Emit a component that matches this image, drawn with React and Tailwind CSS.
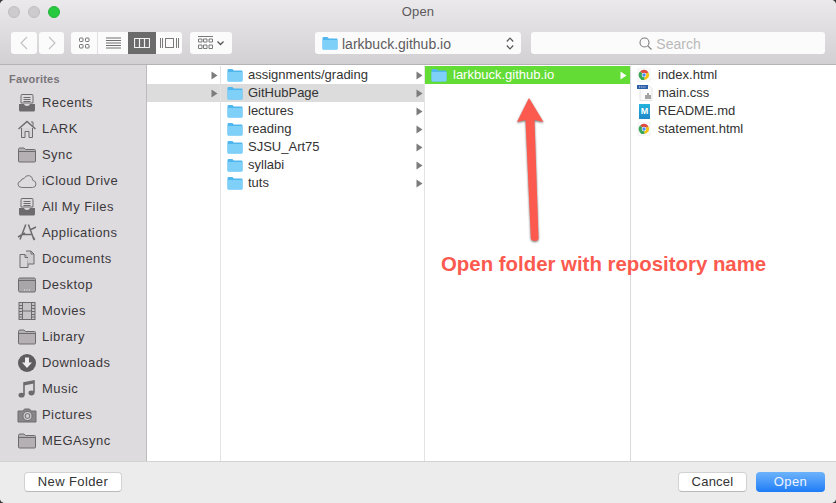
import { useState } from "react";

const GRAY = "#6e6b6e";

function Svg({ w = 20, h = 20, className = "", children }) {
  return (
    <svg width={w} height={h} viewBox={`0 0 ${w} ${h}`} className={className} fill="none">
      {children}
    </svg>
  );
}

function BlueFolder() {
  return (
    <svg width="16" height="14" viewBox="0 0 16 14" className="shrink-0">
      <path d="M0.5 2.2 Q0.5 1 1.6 1 H5.4 L6.8 2.4 H14.4 Q15.5 2.4 15.5 3.5 V12.4 Q15.5 13.4 14.4 13.4 H1.6 Q0.5 13.4 0.5 12.4 Z" fill="#4fb6ee" />
      <path d="M0.5 4 H15.5 V12.4 Q15.5 13.4 14.4 13.4 H1.6 Q0.5 13.4 0.5 12.4 Z" fill="#7fd0f8" />
    </svg>
  );
}

function GrayFolder() {
  return (
    <Svg>
      <path d="M1.5 4.5 Q1.5 3 3 3 H7 L8.5 4.5 H17.5 Q18.5 4.5 18.5 5.5 V16 Q18.5 17 17.5 17 H2.5 Q1.5 17 1.5 16 Z" fill="#b4b0b4" stroke={GRAY} />
      <path d="M1.5 6.5 H18.5" stroke={GRAY} />
    </Svg>
  );
}

function TrayIcon() {
  return (
    <Svg>
      <path d="M4 2.5 Q4 1.5 5 1.5 H15 Q16 1.5 16 2.5 V10 H4 Z" fill="#dcd9dc" stroke={GRAY} />
      <path d="M6.5 4.5 H13.5 M6.5 6.5 H13.5 M6.5 8.5 H13.5" stroke={GRAY} />
      <path d="M2 11 H7 Q7.5 13 10 13 Q12.5 13 13 11 H18 V17 Q18 18.5 16.5 18.5 H3.5 Q2 18.5 2 17 Z" fill={GRAY} />
    </Svg>
  );
}

function HomeIcon() {
  return (
    <Svg>
      <path d="M1.5 10 L10 2.5 L18.5 10" stroke={GRAY} strokeWidth="1.5" />
      <path d="M14 3 H16 V7" stroke={GRAY} />
      <path d="M4.5 9 V18.5 H8 V12.5 H12 V18.5 H15.5 V9" stroke={GRAY} fill="#d8d5d8" />
    </Svg>
  );
}

function CloudIcon() {
  return (
    <Svg>
      <path d="M5 16.5 Q1 16.5 1 13.2 Q1 10.6 3.8 10 Q4.5 7.2 7 7.6 Q8.6 4 12.2 4.6 Q15.8 5.4 15.6 9.2 Q19 10 19 13 Q19 16.5 15.4 16.5 Z" stroke="#7a777a" />
    </Svg>
  );
}

function AppsIcon() {
  return (
    <Svg>
      <path d="M11.4 1.5 L16 14 M8.8 1.5 L3 16.5 M5 11.5 H15 M1 14 L8 10 M13 7 L19 4" stroke={GRAY} strokeWidth="1.5" />
      <path d="M16 14 L17.5 17" stroke={GRAY} strokeWidth="2" />
    </Svg>
  );
}

function DocsIcon() {
  return (
    <Svg>
      <path d="M3 5.5 H8 L11 8.5 V18.5 H3 Z" fill="#d8d5d8" stroke={GRAY} />
      <path d="M9 2 H14 L17 5 V15 H11" fill="#d0cdd0" stroke={GRAY} />
      <path d="M8 5.5 V8.5 H11 M14 2 V5 H17" stroke={GRAY} />
    </Svg>
  );
}

function DesktopIcon() {
  return (
    <Svg>
      <rect x="1.5" y="3" width="17" height="14" rx="1.5" fill="#a9a6a9" stroke={GRAY} />
      <path d="M1.5 5.5 H18.5" stroke={GRAY} />
      <path d="M7 15 H8 M9.5 15 H10.5 M12 15 H13" stroke="#ececec" />
    </Svg>
  );
}

function MoviesIcon() {
  return (
    <Svg>
      <rect x="2" y="1.5" width="16" height="17" fill="#c6c3c6" stroke={GRAY} />
      <path d="M5.5 1.5 V18.5 M14.5 1.5 V18.5 M5.5 10 H14.5" stroke={GRAY} />
      <path d="M2 4.5 H5.5 M2 7.5 H5.5 M2 10.5 H5.5 M2 13.5 H5.5 M2 16 H5.5 M14.5 4.5 H18 M14.5 7.5 H18 M14.5 10.5 H18 M14.5 13.5 H18 M14.5 16 H18" stroke={GRAY} />
    </Svg>
  );
}

function DownloadIcon() {
  return (
    <Svg>
      <circle cx="10" cy="10" r="9" fill="#5f5c5f" />
      <path d="M8 4.5 H12 V9.5 H15 L10 15 L5 9.5 H8 Z" fill="#ececec" />
    </Svg>
  );
}

function MusicIcon() {
  return (
    <Svg>
      <path d="M7 16 V4 L17 2 V13.5" stroke={GRAY} strokeWidth="1.6" />
      <path d="M7 4 L17 2 V4.5 L7 6.5 Z" fill={GRAY} />
      <ellipse cx="4.5" cy="16.2" rx="3" ry="2.4" fill={GRAY} />
      <ellipse cx="14.5" cy="14" rx="3" ry="2.4" fill={GRAY} />
    </Svg>
  );
}

function CameraIcon() {
  return (
    <Svg>
      <path d="M1 6 H6 L7.5 4 H12.5 L14 6 H19 V17 H1 Z" fill="#8a878a" stroke={GRAY} />
      <circle cx="10.5" cy="11" r="4.6" fill="#cfcccf" stroke={GRAY} />
      <circle cx="10.5" cy="11" r="2.4" stroke={GRAY} />
    </Svg>
  );
}

function Chevron({ dir }) {
  return (
    <svg width="8" height="14" viewBox="0 0 8 14" fill="none">
      <path d={dir === "left" ? "M7 1 L1 7 L7 13" : "M1 1 L7 7 L1 13"} stroke="#c2c0c2" strokeWidth="1.1" />
    </svg>
  );
}

function Arrowhead({ color = "#7d7b7d" }) {
  return (
    <svg width="7" height="9" viewBox="0 0 7 9" className="shrink-0">
      <path d="M0.5 0.5 L6.5 4.5 L0.5 8.5 Z" fill={color} />
    </svg>
  );
}

function ChromeDoc() {
  return (
    <svg width="14" height="14" viewBox="0 0 14 14" className="shrink-0">
      <rect x="1" y="0" width="12" height="14" fill="#fafafa" stroke="#e6e6e6" strokeWidth="0.5" />
      <path d="M7 7 L3.1 3.6 A5 5 0 0 1 11.4 4.6 Z" fill="#dd4b3e" />
      <path d="M7 7 L11.4 4.6 A5 5 0 0 1 7.5 12 Z" fill="#f4c20d" />
      <path d="M7 7 L7.5 12 A5 5 0 0 1 3.1 3.6 Z" fill="#3aa757" />
      <circle cx="7" cy="7" r="2.3" fill="#fff" />
      <circle cx="7" cy="7" r="1.7" fill="#4a8bf5" />
    </svg>
  );
}

function CssDoc() {
  return (
    <svg width="16" height="16" viewBox="0 0 16 16" className="shrink-0">
      <path d="M3 0.5 H12 L15 3.5 V15.5 H3 Z" fill="#fafafa" stroke="#d5d5d5" strokeWidth="0.6" />
      <rect x="0" y="0" width="11" height="4" fill="#2d5ea8" />
      <path d="M2 2 H9" stroke="#dfe8f5" strokeDasharray="1.2 1" />
      <path d="M8 10 H10 V8 H12 V10 H14 V14 H8 Z" fill="#a3a3a3" />
    </svg>
  );
}

function MdDoc() {
  return (
    <div className="w-[11px] h-[15px] shrink-0 ml-[2px] bg-gradient-to-b from-[#25b4dc] to-[#1f86c8] flex items-center justify-center">
      <span className="text-white text-[9px] font-bold leading-none">M</span>
    </div>
  );
}

const favorites = [
  ["Recents", <TrayIcon />],
  ["LARK", <HomeIcon />],
  ["Sync", <GrayFolder />],
  ["iCloud Drive", <CloudIcon />],
  ["All My Files", <TrayIcon />],
  ["Applications", <AppsIcon />],
  ["Documents", <DocsIcon />],
  ["Desktop", <DesktopIcon />],
  ["Movies", <MoviesIcon />],
  ["Library", <GrayFolder />],
  ["Downloads", <DownloadIcon />],
  ["Music", <MusicIcon />],
  ["Pictures", <CameraIcon />],
  ["MEGAsync", <GrayFolder />],
];

const folders = ["assignments/grading", "GitHubPage", "lectures", "reading", "SJSU_Art75", "syllabi", "tuts"];

const files = [
  ["index.html", <ChromeDoc />],
  ["main.css", <CssDoc />],
  ["README.md", <MdDoc />],
  ["statement.html", <ChromeDoc />],
];

function Toolbar() {
  return (
    <div className="flex h-[22px] mt-[9px] pl-[11px] pr-[11px]">
      <div className="flex gap-[2px]">
        <button className="w-[26px] bg-[#fbfbfb] rounded-[3px] flex items-center justify-center">
          <Chevron dir="left" />
        </button>
        <button className="w-[25px] bg-[#fbfbfb] rounded-[3px] flex items-center justify-center">
          <Chevron dir="right" />
        </button>
      </div>

      <div className="flex ml-[7px] w-[111px] bg-[#fbfbfb] rounded-[3px] overflow-hidden">
        <div className="w-[27px] flex items-center justify-center border-r border-[#e2e0e2]">
          <svg width="12" height="12" viewBox="0 0 12 12" fill="none" stroke="#6f6f6f">
            <rect x="1.5" y="1" width="3.5" height="3.5" rx="0.8" />
            <rect x="7.5" y="1" width="3.5" height="3.5" rx="0.8" />
            <rect x="1.5" y="7.5" width="3.5" height="3.5" rx="0.8" />
            <rect x="7.5" y="7.5" width="3.5" height="3.5" rx="0.8" />
          </svg>
        </div>
        <div className="w-[30px] flex items-center justify-center">
          <svg width="15" height="12" viewBox="0 0 15 12" stroke="#6f6f6f">
            <path d="M0 1 H15 M0 3.5 H15 M0 6 H15 M0 8.5 H15 M0 11 H15" />
          </svg>
        </div>
        <div className="w-[28px] bg-[#6b6b6b] flex items-center justify-center">
          <svg width="16" height="10" viewBox="0 0 16 10" fill="none" stroke="#f2f2f2">
            <rect x="0.5" y="0.5" width="15" height="9" rx="0.5" strokeWidth="1.2" />
            <path d="M5.5 0.5 V9.5 M10.5 0.5 V9.5" strokeWidth="1.2" />
          </svg>
        </div>
        <div className="flex-1 flex items-center justify-center">
          <svg width="19" height="12" viewBox="0 0 19 12" fill="none" stroke="#7a7a7a">
            <rect x="5.5" y="1.5" width="8" height="9" />
            <path d="M0.5 1 V11 M2.5 1 V11 M16.5 1 V11 M18.5 1 V11" />
          </svg>
        </div>
      </div>

      <div className="ml-[8px] w-[42px] bg-[#fbfbfb] rounded-[3px] flex items-center justify-center gap-[4px]">
        <svg width="15" height="14" viewBox="0 0 15 14" fill="none" stroke="#7a7a7a">
          <path d="M0 0.5 H15" />
          <path d="M0.5 3 H4 V6 H0.5 Z M5.5 3 H9 V6 H5.5 Z M11 3 H14.5 V6 H11 Z M0.5 9 H4 V12.5 H0.5 Z M5.5 9 H9 V12.5 H5.5 Z M11 9 H14.5 V12.5 H11 Z" />
        </svg>
        <svg width="7" height="5" viewBox="0 0 7 5" fill="none" stroke="#555" strokeWidth="1.3">
          <path d="M0.5 0.5 L3.5 3.5 L6.5 0.5" />
        </svg>
      </div>

      <div className="ml-[83px] w-[206px] bg-[#fbfbfb] rounded-[3px] flex items-center pl-[7px] pr-[7px]">
        <BlueFolder />
        <span className="ml-[4px] pt-px text-[14px] text-[#5e5c5e] flex-1">larkbuck.github.io</span>
        <svg width="8" height="13" viewBox="0 0 8 13" fill="none" stroke="#555" strokeWidth="1.2">
          <path d="M0.8 4.5 L4 1.2 L7.2 4.5 M0.8 8.5 L4 11.8 L7.2 8.5" />
        </svg>
      </div>

      <div className="ml-[10px] flex-1 bg-[#fbfbfb] rounded-[3px] flex items-center justify-center gap-[4px] pr-[16px] text-[#b9b9b9]">
        <svg width="13" height="13" viewBox="0 0 13 13" fill="none" stroke="#7c7c7c" strokeWidth="1.1">
          <circle cx="5.5" cy="5.5" r="4.5" />
          <path d="M8.8 8.8 L12.5 12.5" />
        </svg>
        <span className="pt-px text-[14px]">Search</span>
      </div>
    </div>
  );
}

export default function App() {
  const [selected] = useState("GitHubPage");

  return (
    <div className="relative w-[836px] h-[503px] overflow-hidden bg-[#3a3a3a] text-[13px] leading-[18px] font-['Liberation_Sans',Arial,sans-serif]">
      <div className="flex flex-col h-full rounded-[5px] overflow-hidden bg-[#ececec]">
        <header className="h-[65px] shrink-0 bg-gradient-to-b from-[#ebe9eb] to-[#d2d0d2] border-b border-[#b5b3b5]">
          <div className="relative flex items-center h-[23px] pl-[8px] gap-[8px]">
            <span className="w-[12px] h-[12px] rounded-full bg-[#cdcbcd] border border-[#bfbdbf]" />
            <span className="w-[12px] h-[12px] rounded-full bg-[#cdcbcd] border border-[#bfbdbf]" />
            <span className="w-[12px] h-[12px] rounded-full bg-[#27c93f] border border-[#22b537]" />
            <span className="absolute left-0 right-0 pt-px text-center text-[#5c5a5c] tracking-[0.2px]">Open</span>
          </div>
          <Toolbar />
        </header>

        <div className="flex flex-1 min-h-0">
          <aside className="w-[147px] shrink-0 bg-[#dedbdf] border-r border-[#bdbbbd]">
            <div className="h-[25px] pl-[9px] pt-[5px] text-[11px] font-bold text-[#787578] tracking-[0.2px]">Favorites</div>
            {favorites.map(([name, icon]) => (
              <div key={name} className="h-[26px] flex items-center pl-[17px] gap-[5px] text-[#3b393b] tracking-[0.45px]">
                {icon}
                <span>{name}</span>
              </div>
            ))}
          </aside>

          <main className="flex flex-1 min-w-0 bg-white pt-px">
            <section className="w-[74px] shrink-0 border-r border-[#e3e3e3]">
              <div className="h-[18px] flex items-center justify-end pr-[2px]">
                <Arrowhead />
              </div>
              <div className="h-[18px] flex items-center justify-end pr-[2px] bg-[#dcdcdc]">
                <Arrowhead />
              </div>
            </section>

            <section className="w-[204px] shrink-0 border-r border-[#e3e3e3]">
              {folders.map((f) => (
                <div key={f} className={`h-[18px] flex items-center pl-[6px] pr-[1px] text-[#333] ${f === selected ? "bg-[#dcdcdc]" : ""}`}>
                  <BlueFolder />
                  <span className="ml-[5px] flex-1">{f}</span>
                  <Arrowhead />
                </div>
              ))}
            </section>

            <section className="w-[206px] shrink-0 border-r border-[#d9d9d9]">
              <div className="h-[18px] flex items-center pl-[6px] pr-[3px] bg-[#63dc35] text-white">
                <BlueFolder />
                <span className="ml-[6px] flex-1">larkbuck.github.io</span>
                <Arrowhead color="#ffffff" />
              </div>
            </section>

            <section className="flex-1 pl-[6px]">
              {files.map(([name, icon]) => (
                <div key={name} className="h-[18px] flex items-center text-[#333]">
                  <span className="w-[21px] flex items-center">{icon}</span>
                  <span>{name}</span>
                </div>
              ))}
            </section>
          </main>
        </div>

        <footer className="h-[42px] shrink-0 border-t border-[#d3d3d3] bg-[#ececec] flex items-center pl-[24px] pr-[11px] pb-[1px]">
          <button className="w-[98px] h-[20px] bg-white rounded-[4px] border border-[#d2d2d2] border-b-[#b9b9b9] text-[#333] tracking-[0.4px]">New Folder</button>
          <button className="ml-auto w-[69px] h-[20px] bg-white rounded-[4px] border border-[#d2d2d2] border-b-[#b9b9b9] text-[#333] tracking-[0.25px]">Cancel</button>
          <button className="ml-[9px] w-[69px] h-[20px] rounded-[4px] bg-gradient-to-b from-[#6db3fb] to-[#1a7cf7] text-[#eef5ff] tracking-[0.4px]">Open</button>
        </footer>
      </div>

      {/* annotation on top of the dialog */}
      <svg width="60" height="160" viewBox="0 0 60 160" className="absolute left-[505px] top-[90px] drop-shadow-[0_1px_1px_rgba(0,0,0,0.55)]">
        <path d="M24 8 L38.5 32 L29.5 30 L33.5 148 Q33.5 151 30 151 Q26 151 25.8 148 L20.5 30 L12 32 Z" fill="#fc5a4f" />
      </svg>
      <div className="absolute left-[441px] top-[252px] text-[20.4px] leading-[24px] font-bold text-[#fc5a4f] whitespace-nowrap">
        Open folder with repository name
      </div>
    </div>
  );
}
